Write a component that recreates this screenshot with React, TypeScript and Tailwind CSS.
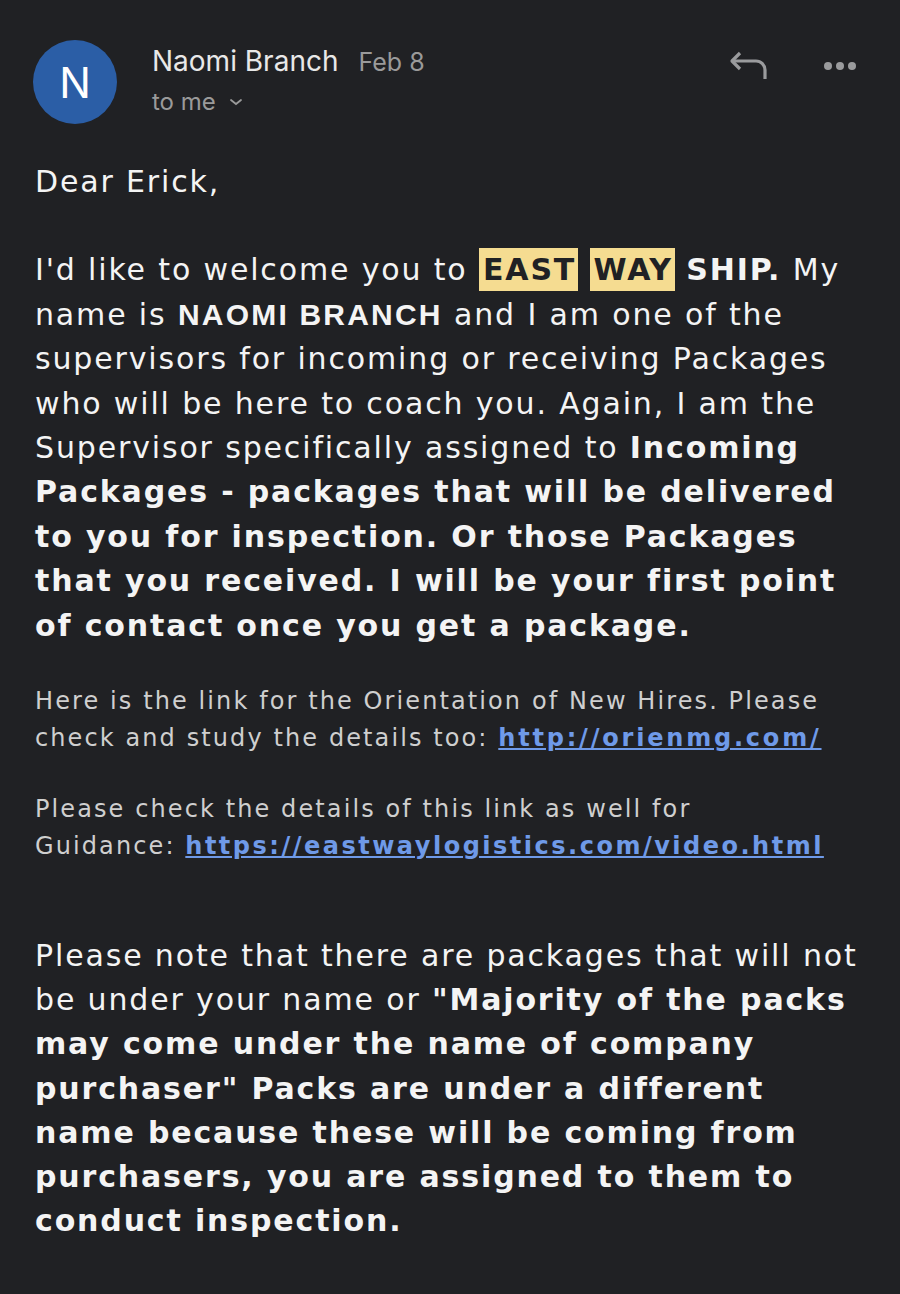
export default function App() {
  return (
    <div className="min-h-[1294px] w-[900px] bg-[#202124] text-white" style={{ fontFamily: '"DejaVu Sans", Verdana, sans-serif' }}>
      <div className="flex items-start px-[33px] pt-[40px]">
        <div className="flex h-[84px] w-[84px] shrink-0 items-center justify-center rounded-full bg-[#2b5ea6] text-[42px] text-white [font-family:Inter,sans-serif]">
          N
        </div>
        <div className="ml-[35px] flex-1 [font-family:Inter,sans-serif]">
          <div className="flex items-baseline gap-[20px]">
            <span className="text-[28px] text-[#e8e8e8]">Naomi Branch</span>
            <span className="text-[25px] text-[#9a9a9a]">Feb 8</span>
          </div>
          <div className="mt-[2px] flex items-center gap-[13px] text-[24px] text-[#9a9a9a]">
            to me
            <svg width="14" height="10" viewBox="0 0 14 10" fill="none" stroke="#9a9a9a" strokeWidth="1.8" strokeLinecap="round">
              <path d="M2 3l5 4 5-4" />
            </svg>
          </div>
        </div>
        <div className="mt-[10px] flex items-center gap-[54px] pr-[10px]">
          <svg width="40" height="32" viewBox="0 0 40 32" fill="none" stroke="#9a9b9d" strokeWidth="3.2" strokeLinejoin="round">
            <path d="M11 3L3 11l8 8" />
            <path d="M3 11h24a9 9 0 0 1 9 9v9" />
          </svg>
          <svg width="34" height="10" viewBox="0 0 34 10" fill="#9a9b9d">
            <circle cx="5" cy="5" r="4" />
            <circle cx="17" cy="5" r="4" />
            <circle cx="29" cy="5" r="4" />
          </svg>
        </div>
      </div>

      <div className="px-[35px] pt-[36px]">
        <p className="text-[30px] leading-[44.4px] tracking-[1.85px] text-[#f4f4f4]">Dear Erick,</p>

        <p className="mt-[44px] text-[30px] leading-[44.4px] tracking-[1.85px] text-[#f4f4f4]">
          I'd like to welcome you to{" "}
          <b className="bg-[#f5dc91] py-[4px] pr-[2px] pl-[4px] text-[#202124]">EAST</b>{" "}
          <b className="bg-[#f5dc91] py-[4px] pr-[2px] pl-[4px] text-[#202124]">WAY</b>{" "}
          <b>SHIP.</b> My
          <br />
          name is <b className="tracking-[2.2px] [font-family:'Liberation_Sans',Arial,sans-serif]">NAOMI BRANCH</b> and I am one of the
          <br />
          supervisors for incoming or receiving Packages
          <br />
          who will be here to coach you. Again, I am the
          <br />
          Supervisor specifically assigned to <b>Incoming</b>
          <br />
          <b>Packages - packages that will be delivered</b>
          <br />
          <b>to you for inspection. Or those Packages</b>
          <br />
          <b>that you received. I will be your first point</b>
          <br />
          <b>of contact once you get a package.</b>
        </p>

        <p className="mt-[35px] text-[24px] leading-[37px] tracking-[2.1px] text-[#cfcfcf]">
          Here is the link for the Orientation of New Hires. Please
          <br />
          check and study the details too:{" "}
          <a className="font-bold tracking-[2.8px] text-[#6f9ae8] underline">http://orienmg.com/</a>
        </p>

        <p className="mt-[34px] text-[24px] leading-[37px] tracking-[2.1px] text-[#cfcfcf]">
          Please check the details of this link as well for
          <br />
          Guidance:{" "}
          <a className="font-bold tracking-[2.5px] text-[#6f9ae8] underline">https://eastwaylogistics.com/video.html</a>
        </p>

        <p className="mt-[69px] text-[30px] leading-[44.2px] tracking-[1.85px] text-[#f4f4f4]">
          Please note that there are packages that will not
          <br />
          be under your name or <b>"Majority of the packs</b>
          <br />
          <b>may come under the name of company</b>
          <br />
          <b>purchaser" Packs are under a different</b>
          <br />
          <b>name because these will be coming from</b>
          <br />
          <b>purchasers, you are assigned to them to</b>
          <br />
          <b>conduct inspection.</b>
        </p>
      </div>
    </div>
  );
}
